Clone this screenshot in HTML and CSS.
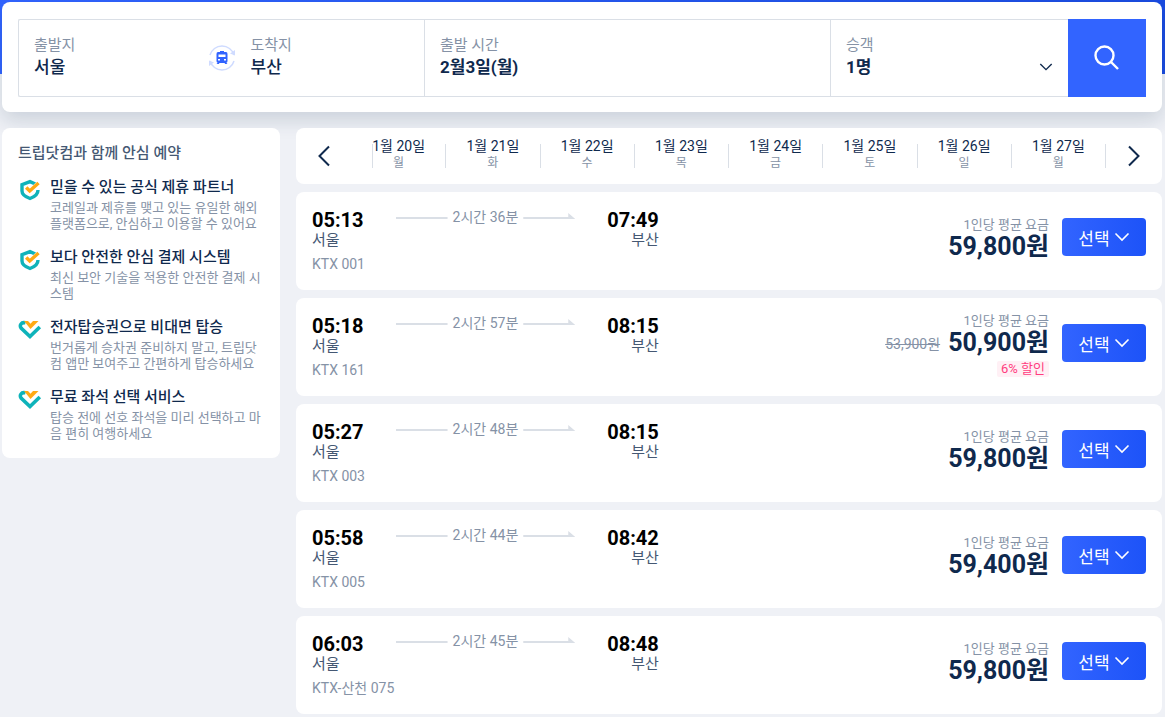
FILE: index.html
```html
<!DOCTYPE html>
<html lang="ko">
<head>
    <meta charset="UTF-8">
    <meta name="viewport" content="width=device-width, initial-scale=1.0">
    <title>서울 - 부산 기차표</title>
    <link rel="stylesheet" href="styles.css">
</head>
<body>
    <!-- 아이콘 -->
    <svg class="sprite" aria-hidden="true">
        <symbol id="chevron" viewBox="0 0 16 16">
            <path d="M1.5 4.5 8 11l6.500-6.500" fill="none" stroke="currentColor" stroke-width="1.600"/>
        </symbol>
        <symbol id="shield" viewBox="0 0 24 24">
            <path d="M18.500 6.500 12 3.700 4 6.700v6.300c0 3.500 3.300 5.800 8 7.500 4.700-1.700 8-4.500 8-8.500" fill="none" stroke="#0fb3ba" stroke-width="3.400"/>
            <path d="M8.500 10.500l3.200 3.300L21 5" fill="none" stroke="#fff" stroke-width="5"/>
            <path d="M8.200 9.500l3.500 3.500L20.500 5" fill="none" stroke="#ffa914" stroke-width="3.400"/>
        </symbol>
        <symbol id="heart" viewBox="0 0 24 24">
            <path d="M7.500 4.800C3 3.800 1.200 7.500 3.300 10.300L12 18.500l9.800-9.500" fill="none" stroke="#0fb3ba" stroke-width="3.600"/>
            <path d="M6 3h4l2.500 2.700L15 3h5.500l-8 8z" fill="#ffa914"/>
        </symbol>
    </svg>

    <div class="hero"></div>

    <div class="page">
        <form class="search">
            <div class="search-box">
                <div class="route">
                    <div class="field">
                        <label for="from">출발지</label>
                        <input type="text" id="from" value="서울">
                    </div>
                    <button type="button" class="swap" aria-label="출발지와 도착지 바꾸기">
                        <svg width="28" height="28" viewBox="0 0 28 28">
                            <g fill="none" stroke="#cfdbff" stroke-width="1.500">
                                <path d="M2 11A12.500 12.500 0 0 1 26 11"/>
                                <path d="M26 17A12.500 12.500 0 0 1 2 17"/>
                            </g>
                            <path d="M27 6v5.500l-5-2zM1 22v-5.500l5 2z" fill="#cfdbff"/>
                            <path d="M12 7h4v1h2q1.500 0 1.500 2v7q0 1.500-1.200 1.800L19.500 20h-2.300l-.7-1h-5l-.7 1H8.500l1.200-1.200Q8.500 18.500 8.500 17v-7q0-2 1.500-2h2z" fill="#3264ff"/>
                            <path d="M10.500 10.500h7v2.500h-7zM10 15h2v1.500h-2zM16 15h2v1.500h-2z" fill="#fff"/>
                        </svg>
                    </button>
                    <div class="field">
                        <label for="to">도착지</label>
                        <input type="text" id="to" value="부산">
                    </div>
                </div>
                <div class="field date-field">
                    <label for="date">출발 시간</label>
                    <input type="text" id="date" value="2월3일(월)">
                </div>
                <div class="field passenger-field">
                    <label for="passenger">승객</label>
                    <div class="select-wrap">
                        <select id="passenger">
                            <option>1명</option>
                        </select>
                        <svg class="select-arrow" width="14" height="14"><use href="#chevron"/></svg>
                    </div>
                </div>
                <button type="submit" class="search-btn" aria-label="검색">
                    <svg width="28" height="28" viewBox="0 0 28 28" fill="none" stroke="#fff" stroke-width="2.400">
                        <circle cx="11.500" cy="11.500" r="9"/>
                        <path d="M18 18l7 7"/>
                    </svg>
                </button>
            </div>
        </form>

        <div class="content">
            <aside class="promise">
                <h2>트립닷컴과 함께 안심 예약</h2>
                <ul>
                    <li>
                        <svg width="24" height="24"><use href="#shield"/></svg>
                        <div>
                            <h3>믿을 수 있는 공식 제휴 파트너</h3>
                            <p>코레일과 제휴를 맺고 있는 유일한 해외 플랫폼으로, 안심하고 이용할 수 있어요</p>
                        </div>
                    </li>
                    <li>
                        <svg width="24" height="24"><use href="#shield"/></svg>
                        <div>
                            <h3>보다 안전한 안심 결제 시스템</h3>
                            <p>최신 보안 기술을 적용한 안전한 결제 시스템</p>
                        </div>
                    </li>
                    <li>
                        <svg width="24" height="24"><use href="#heart"/></svg>
                        <div>
                            <h3>전자탑승권으로 비대면 탑승</h3>
                            <p>번거롭게 승차권 준비하지 말고, 트립닷컴 앱만 보여주고 간편하게 탑승하세요</p>
                        </div>
                    </li>
                    <li>
                        <svg width="24" height="24"><use href="#heart"/></svg>
                        <div>
                            <h3>무료 좌석 선택 서비스</h3>
                            <p>탑승 전에 선호 좌석을 미리 선택하고 마음 편히 여행하세요</p>
                        </div>
                    </li>
                </ul>
            </aside>

            <main class="results">
                <nav class="dates">
                    <button type="button" class="date-nav" aria-label="이전 날짜">
                        <svg width="24" height="24" viewBox="0 0 24 24"><path d="M17 2.500 7.500 12l9.500 9.500"/></svg>
                    </button>
                    <div class="date-list">
                        <button type="button" class="date">1월 20일<span>월</span></button>
                        <button type="button" class="date">1월 21일<span>화</span></button>
                        <button type="button" class="date">1월 22일<span>수</span></button>
                        <button type="button" class="date">1월 23일<span>목</span></button>
                        <button type="button" class="date">1월 24일<span>금</span></button>
                        <button type="button" class="date">1월 25일<span>토</span></button>
                        <button type="button" class="date">1월 26일<span>일</span></button>
                        <button type="button" class="date">1월 27일<span>월</span></button>
                    </div>
                    <button type="button" class="date-nav" aria-label="다음 날짜">
                        <svg width="24" height="24" viewBox="0 0 24 24"><path d="M7 2.500 16.500 12 7 21.500"/></svg>
                    </button>
                </nav>

                <article class="train">
                    <div class="trip">
                        <div class="times">
                            <div class="stop"><strong>05:13</strong><span>서울</span></div>
                            <div class="duration">2시간 36분</div>
                            <div class="stop arrive"><strong>07:49</strong><span>부산</span></div>
                        </div>
                        <div class="train-no">KTX 001</div>
                    </div>
                    <div class="fare">
                        <span class="fare-label">1인당 평균 요금</span>
                        <div class="fare-row"><strong>59,800원</strong></div>
                    </div>
                    <button type="button" class="select-btn">선택<svg width="16" height="16"><use href="#chevron"/></svg></button>
                </article>

                <article class="train">
                    <div class="trip">
                        <div class="times">
                            <div class="stop"><strong>05:18</strong><span>서울</span></div>
                            <div class="duration">2시간 57분</div>
                            <div class="stop arrive"><strong>08:15</strong><span>부산</span></div>
                        </div>
                        <div class="train-no">KTX 161</div>
                    </div>
                    <div class="fare">
                        <span class="fare-label">1인당 평균 요금</span>
                        <div class="fare-row"><del>53,900원</del><strong>50,900원</strong></div>
                        <span class="discount">6% 할인</span>
                    </div>
                    <button type="button" class="select-btn">선택<svg width="16" height="16"><use href="#chevron"/></svg></button>
                </article>

                <article class="train">
                    <div class="trip">
                        <div class="times">
                            <div class="stop"><strong>05:27</strong><span>서울</span></div>
                            <div class="duration">2시간 48분</div>
                            <div class="stop arrive"><strong>08:15</strong><span>부산</span></div>
                        </div>
                        <div class="train-no">KTX 003</div>
                    </div>
                    <div class="fare">
                        <span class="fare-label">1인당 평균 요금</span>
                        <div class="fare-row"><strong>59,800원</strong></div>
                    </div>
                    <button type="button" class="select-btn">선택<svg width="16" height="16"><use href="#chevron"/></svg></button>
                </article>

                <article class="train">
                    <div class="trip">
                        <div class="times">
                            <div class="stop"><strong>05:58</strong><span>서울</span></div>
                            <div class="duration">2시간 44분</div>
                            <div class="stop arrive"><strong>08:42</strong><span>부산</span></div>
                        </div>
                        <div class="train-no">KTX 005</div>
                    </div>
                    <div class="fare">
                        <span class="fare-label">1인당 평균 요금</span>
                        <div class="fare-row"><strong>59,400원</strong></div>
                    </div>
                    <button type="button" class="select-btn">선택<svg width="16" height="16"><use href="#chevron"/></svg></button>
                </article>

                <article class="train">
                    <div class="trip">
                        <div class="times">
                            <div class="stop"><strong>06:03</strong><span>서울</span></div>
                            <div class="duration">2시간 45분</div>
                            <div class="stop arrive"><strong>08:48</strong><span>부산</span></div>
                        </div>
                        <div class="train-no">KTX-산천 075</div>
                    </div>
                    <div class="fare">
                        <span class="fare-label">1인당 평균 요금</span>
                        <div class="fare-row"><strong>59,800원</strong></div>
                    </div>
                    <button type="button" class="select-btn">선택<svg width="16" height="16"><use href="#chevron"/></svg></button>
                </article>
            </main>
        </div>
    </div>
</body>
</html>
```
FILE: styles.css
```css
* {
    box-sizing: border-box;
    margin: 0;
    padding: 0;
}

body {
    background: #eff1f6;
    color: #0f294d;
    font-family: Roboto, 'Noto Sans CJK KR', sans-serif;
    font-size: 14px;
    position: relative;
}

button,
input,
select {
    font: inherit;
    color: inherit;
    border: none;
    background: none;
}

button {
    cursor: pointer;
}

svg {
    display: block;
    flex: none;
}

.sprite {
    position: absolute;
    width: 0;
    height: 0;
}

/* 상단 파란 배경 */
.hero {
    position: absolute;
    top: 0;
    left: 0;
    right: 0;
    height: 74px;
    background: linear-gradient(90deg, #3264ff, #1a4be0);
}

.page {
    position: relative;
    padding: 2px 3px 3px 2px;
}

/* 검색창 */
.search {
    padding: 17px 16px 15px;
    background: #fff;
    border-radius: 8px;
    box-shadow: 0 8px 20px rgba(15, 41, 77, 0.16);
}

.search-box {
    display: grid;
    grid-template-columns: 405fr 406fr 238fr 78px;
    height: 78px;
    border: 1px solid #dadfe6;
    border-right: none;
    border-radius: 2px;
}

.route {
    display: flex;
    min-width: 0;
}

.route .field {
    flex: 1;
}

.field {
    min-width: 0;
    padding: 15px 15px 0;
}

.field label {
    display: block;
    color: #8592a6;
    font-size: 15px;
    line-height: 20px;
}

.field input,
.field select {
    display: block;
    width: 100%;
    font-size: 17px;
    font-weight: 500;
    line-height: 24px;
    height: 24px;
    outline: none;
    appearance: none;
}

.swap {
    align-self: center;
}

.date-field,
.passenger-field {
    border-left: 1px solid #dadfe6;
}

.field.date-field input,
.field.passenger-field select {
    font-weight: 700;
}

.select-wrap {
    display: flex;
    align-items: center;
}

.select-arrow {
    pointer-events: none;
}

.search-btn {
    display: flex;
    align-items: center;
    justify-content: center;
    margin: -1px 0;
    background: #3264ff;
}

.content {
    display: flex;
    align-items: flex-start;
    gap: 16px;
    margin-top: 16px;
}

/* 안심 예약 */
.promise {
    flex: none;
    width: 278px;
    padding: 15px 16px 16px;
    background: #fff;
    border-radius: 8px;
}

.promise h2 {
    color: #455873;
    font-size: 15px;
    font-weight: 500;
    line-height: 20px;
}

.promise ul {
    display: flex;
    flex-direction: column;
    gap: 14px;
    list-style: none;
    margin-top: 13px;
}

.promise li {
    display: flex;
    gap: 8px;
}

.promise li svg {
    margin-top: 2px;
}

.promise h3 {
    font-size: 15px;
    font-weight: 500;
    line-height: 22px;
}

.promise p {
    margin-top: 2px;
    color: #8592a6;
    font-size: 13px;
    line-height: 16px;
}

.results {
    display: flex;
    flex: 1;
    flex-direction: column;
    gap: 8px;
    min-width: 0;
}

.dates,
.train {
    display: flex;
    align-items: center;
    background: #fff;
    border-radius: 8px;
}

/* 날짜 선택 */
.dates {
    height: 56px;
    padding: 0 16px;
}

.date-nav svg {
    fill: none;
    stroke: #0f294d;
    stroke-width: 2;
}

.date-list {
    display: flex;
    flex: 1;
    justify-content: flex-end;
    height: 24px;
    min-width: 0;
    margin: 0 16px 0 36px;
    border-left: 1px solid #dadfe6;
}

.date {
    display: flex;
    flex: 0 0 12.86%;
    flex-direction: column;
    align-items: center;
    justify-content: center;
    padding-bottom: 4px;
    border-right: 1px solid #dadfe6;
    line-height: 18px;
    white-space: nowrap;
}

.date span {
    color: #8592a6;
    font-size: 12px;
    line-height: 16px;
}

/* 열차 목록 */
.train {
    height: 98px;
    padding: 0 16px;
}

.trip {
    flex: 1;
}

.times {
    display: flex;
    align-items: flex-start;
    gap: 32px;
}

.stop strong {
    display: block;
    color: #000;
    font-size: 20px;
    font-weight: 700;
    line-height: 24px;
}

.stop span {
    display: block;
    color: #455873;
    font-size: 15px;
    line-height: 16px;
}

.arrive {
    text-align: right;
}

.duration {
    display: flex;
    align-items: center;
    gap: 5px;
    color: #8592a6;
    line-height: 18px;
}

.duration::before,
.duration::after {
    content: '';
    width: 52px;
    height: 8px;
    background: #dadfe6;
    clip-path: polygon(0 4px, 100% 4px, 100% 6px, 0 6px);
}

.duration::after {
    clip-path: polygon(0 4px, 45px 4px, 45px 0, 52px 6px, 0 6px);
}

.train-no {
    margin-top: 6px;
    color: #8592a6;
    line-height: 20px;
}

.fare {
    display: flex;
    flex-direction: column;
    align-items: flex-end;
    margin-right: 13px;
    padding-bottom: 4px;
}

.fare-label {
    color: #8592a6;
    font-size: 13px;
    line-height: 16px;
}

.fare-row {
    display: flex;
    align-items: center;
    gap: 8px;
}

.fare-row strong {
    font-size: 25px;
    font-weight: 700;
    line-height: 28px;
}

.fare-row del {
    color: #8592a6;
}

.discount {
    margin-top: 4px;
    padding: 0 4px;
    background: #fff0f5;
    border-radius: 2px;
    color: #ff3d7f;
    font-size: 13px;
    line-height: 16px;
}

.select-btn {
    display: flex;
    align-items: center;
    justify-content: center;
    gap: 4px;
    width: 84px;
    height: 38px;
    margin-top: -8px;
    border-radius: 4px;
    background: linear-gradient(90deg, #3264ff, #1d53f8);
    color: #fff;
    font-size: 17px;
}
```
